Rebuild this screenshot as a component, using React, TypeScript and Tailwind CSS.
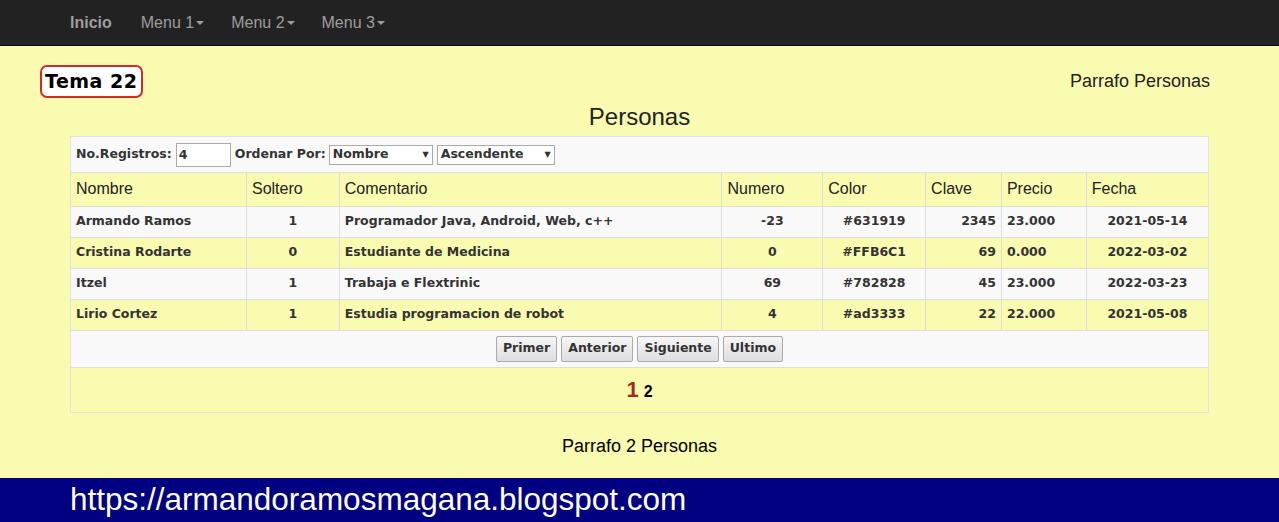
import React from "react";

const rows = [
  { nombre: "Armando Ramos", soltero: 1, comentario: "Programador Java, Android, Web, c++", numero: -23, color: "#631919", clave: 2345, precio: "23.000", fecha: "2021-05-14" },
  { nombre: "Cristina Rodarte", soltero: 0, comentario: "Estudiante de Medicina", numero: 0, color: "#FFB6C1", clave: 69, precio: "0.000", fecha: "2022-03-02" },
  { nombre: "Itzel", soltero: 1, comentario: "Trabaja e Flextrinic", numero: 69, color: "#782828", clave: 45, precio: "23.000", fecha: "2022-03-23" },
  { nombre: "Lirio Cortez", soltero: 1, comentario: "Estudia programacion de robot", numero: 4, color: "#ad3333", clave: 22, precio: "22.000", fecha: "2021-05-08" },
];

const headers = ["Nombre", "Soltero", "Comentario", "Numero", "Color", "Clave", "Precio", "Fecha"];
const widths = ["w-[176px]", "w-[93px]", "w-[384px]", "w-[101px]", "w-[103px]", "w-[76px]", "w-[85px]", "w-[122px]"];

function Caret() {
  return <span className="inline-block ml-[2px] align-middle border-t-[4px] border-t-current border-x-[4px] border-x-transparent" />;
}

export default function App() {
  return (
    <div className="min-h-[522px] bg-[#f9fbb0] flex flex-col font-['Liberation_Sans',Arial,sans-serif] text-[#333]">
      {/* Navbar */}
      <nav className="h-[46px] bg-[#222222] flex items-center pl-[70px] border-b border-[#080808]">
        <span className="text-[#9d9d9d] text-[16px] font-bold mr-[29px]">Inicio</span>
        <span className="text-[#9d9d9d] text-[16px] mr-[27px]">Menu 1<Caret /></span>
        <span className="text-[#9d9d9d] text-[16px] mr-[27px]">Menu 2<Caret /></span>
        <span className="text-[#9d9d9d] text-[16px]">Menu 3<Caret /></span>
      </nav>

      {/* Title row */}
      <div className="flex items-center justify-between pl-[40px] pr-[69px] pt-[19px]">
        <div className="bg-white border-2 border-[#d42a2a] rounded-[7px] h-[33px] px-[3px] flex items-center">
          <span className="text-black text-[19px] font-black tracking-[0.5px] font-['DejaVu_Sans',sans-serif]">Tema 22</span>
        </div>
        <span className="text-[18px] text-[#222]">Parrafo Personas</span>
      </div>

      <h2 className="text-center text-[24px] text-[#222] mt-[4px] leading-[30px]">Personas</h2>

      {/* Table */}
      <div className="mx-[70px] mt-[4px] border border-[#e2e2e2]">
        <div className="bg-[#f9f9f9] h-[36px] flex items-center pl-[5px] text-[13px] font-bold font-['DejaVu_Sans',sans-serif] text-[#333] border-b border-[#ddd]">
          <span className="text-[12.5px]">No.Registros:</span>
          <input className="ml-[4px] w-[55px] h-[24px] border border-[#aaa] bg-white px-[2px] text-[12.5px] font-bold" defaultValue="4" />
          <span className="ml-[4px] text-[12.5px]">Ordenar Por:</span>
          <div className="ml-[3px] w-[104px] h-[20px] border border-[#aaa] bg-white flex items-center justify-between px-[3px] text-[12.5px]">
            <span>Nombre</span><span className="text-[8px]">▼</span>
          </div>
          <div className="ml-[4px] w-[118px] h-[20px] border border-[#aaa] bg-white flex items-center justify-between px-[3px] text-[12.5px]">
            <span>Ascendente</span><span className="text-[8px]">▼</span>
          </div>
        </div>
        <table className="w-full border-collapse">
          <thead>
            <tr className="h-[33px] text-[16px] text-[#222]">
              {headers.map((h, i) => (
                <th key={h} className={`${widths[i]} font-normal text-left pl-[5px] border-l border-b border-[#ddd] first:border-l-0`}>{h}</th>
              ))}
            </tr>
          </thead>
          <tbody className="text-[12.5px] font-bold font-['DejaVu_Sans',sans-serif] text-[#333]">
            {rows.map((r, idx) => (
              <tr key={r.nombre} className={`h-[31px] ${idx % 2 === 0 ? "bg-[#f9f9f9]" : ""}`}>
                <td className="pl-[5px] border-b border-[#ddd]">{r.nombre}</td>
                <td className="text-center border-l border-b border-[#ddd]">{r.soltero}</td>
                <td className="pl-[5px] border-l border-b border-[#ddd]">{r.comentario}</td>
                <td className="text-center border-l border-b border-[#ddd]">{r.numero}</td>
                <td className="text-center border-l border-b border-[#ddd]">{r.color}</td>
                <td className="text-right pr-[5px] border-l border-b border-[#ddd]">{r.clave}</td>
                <td className="pl-[5px] border-l border-b border-[#ddd]">{r.precio}</td>
                <td className="text-center border-l border-b border-[#ddd]">{r.fecha}</td>
              </tr>
            ))}
          </tbody>
        </table>
        <div className="bg-[#f9f9f9] h-[37px] flex items-center justify-center gap-[4px] border-b border-[#ddd] font-['DejaVu_Sans',sans-serif]">
          {["Primer", "Anterior", "Siguiente", "Ultimo"].map((b) => (
            <button key={b} className="h-[26px] px-[6px] text-[12.5px] font-bold text-[#333] border border-[#aaa] rounded-[2px] bg-gradient-to-b from-[#f6f6f6] to-[#dedede]">{b}</button>
          ))}
        </div>
        <div className="h-[44px] flex items-center justify-center gap-[5px] font-bold">
          <span className="text-[#a52a1a] text-[22px]">1</span>
          <span className="text-black text-[16px] mt-[4px]">2</span>
        </div>
      </div>

      <p className="text-center text-[18px] text-black mt-[20px]">Parrafo 2 Personas</p>

      {/* Footer */}
      <footer className="mt-auto h-[44px] bg-[#000080] flex items-center pl-[70px]">
        <span className="text-white text-[31.5px] leading-none">https://armandoramosmagana.blogspot.com</span>
      </footer>
    </div>
  );
}
